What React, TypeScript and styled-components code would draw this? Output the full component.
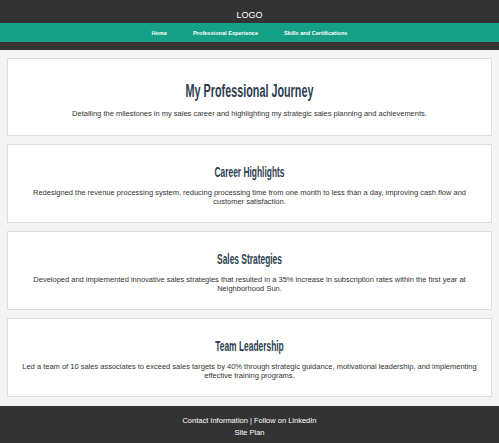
import React from "react";
import styled, { createGlobalStyle } from "styled-components";

const GlobalStyle = createGlobalStyle`
  html, body {
    margin: 0;
    padding: 0;
    background: #f4f4f4;
    font-family: "Liberation Sans", Arial, sans-serif;
    color: #333;
  }
`;

const Header = styled.header`
  background: #333;
  padding: 8px 0;
  text-align: center;
`;

const Logo = styled.div`
  color: #fff;
  font-size: 9px;
  line-height: 15px;
`;

const Nav = styled.nav`
  background: #16a085;
  height: 19px;
  display: flex;
  justify-content: center;
  align-items: center;
  gap: 26px;
`;

const NavLink = styled.a`
  color: #fff;
  font-size: 5.6px;
  font-weight: bold;
  text-decoration: none;
`;

const Main = styled.main`
  padding: 8px 7px 1px;
`;

const Card = styled.section<{ $hero?: boolean }>`
  background: #fff;
  border: 1px solid #ddd;
  margin-bottom: 8px;
  padding: ${(p) => (p.$hero ? "22px 10px 17px" : "19px 10px 16px")};
  text-align: center;
`;

const Title = styled.h1<{ $size: number; $line: number }>`
  margin: 0 0 8px;
  font-family: "Liberation Sans", Arial, sans-serif;
  font-size: ${(p) => p.$size}px;
  line-height: ${(p) => p.$line}px;
  font-weight: bold;
  color: #2c3e50;
  transform: scaleX(0.6);
`;

const Text = styled.p`
  margin: 0;
  font-size: 7.5px;
  line-height: 9px;
  color: #333;
`;

const Footer = styled.footer`
  background: #333;
  color: #fff;
  text-align: center;
  padding: 9px 0 6px;
  font-size: 7.5px;
  line-height: 12px;
`;

const cards = [
  {
    title: "Career Highlights",
    text: "Redesigned the revenue processing system, reducing processing time from one month to less than a day, improving cash flow and customer satisfaction.",
  },
  {
    title: "Sales Strategies",
    text: "Developed and implemented innovative sales strategies that resulted in a 35% increase in subscription rates within the first year at Neighborhood Sun.",
  },
  {
    title: "Team Leadership",
    text: "Led a team of 10 sales associates to exceed sales targets by 40% through strategic guidance, motivational leadership, and implementing effective training programs.",
  },
];

export default function App() {
  return (
    <>
      <GlobalStyle />
      <Header>
        <Logo>LOGO</Logo>
        <Nav>
          <NavLink href="#">Home</NavLink>
          <NavLink href="#">Professional Experience</NavLink>
          <NavLink href="#">Skills and Certifications</NavLink>
        </Nav>
      </Header>
      <Main>
        <Card $hero>
          <Title $size={18} $line={20}>
            My Professional Journey
          </Title>
          <Text>
            Detailing the milestones in my sales career and highlighting my strategic sales planning and achievements.
          </Text>
        </Card>
        {cards.map((c) => (
          <Card key={c.title}>
            <Title as="h2" $size={14} $line={16}>
              {c.title}
            </Title>
            <Text>{c.text}</Text>
          </Card>
        ))}
      </Main>
      <Footer>
        <div>Contact Information | Follow on LinkedIn</div>
        <div>Site Plan</div>
      </Footer>
    </>
  );
}
